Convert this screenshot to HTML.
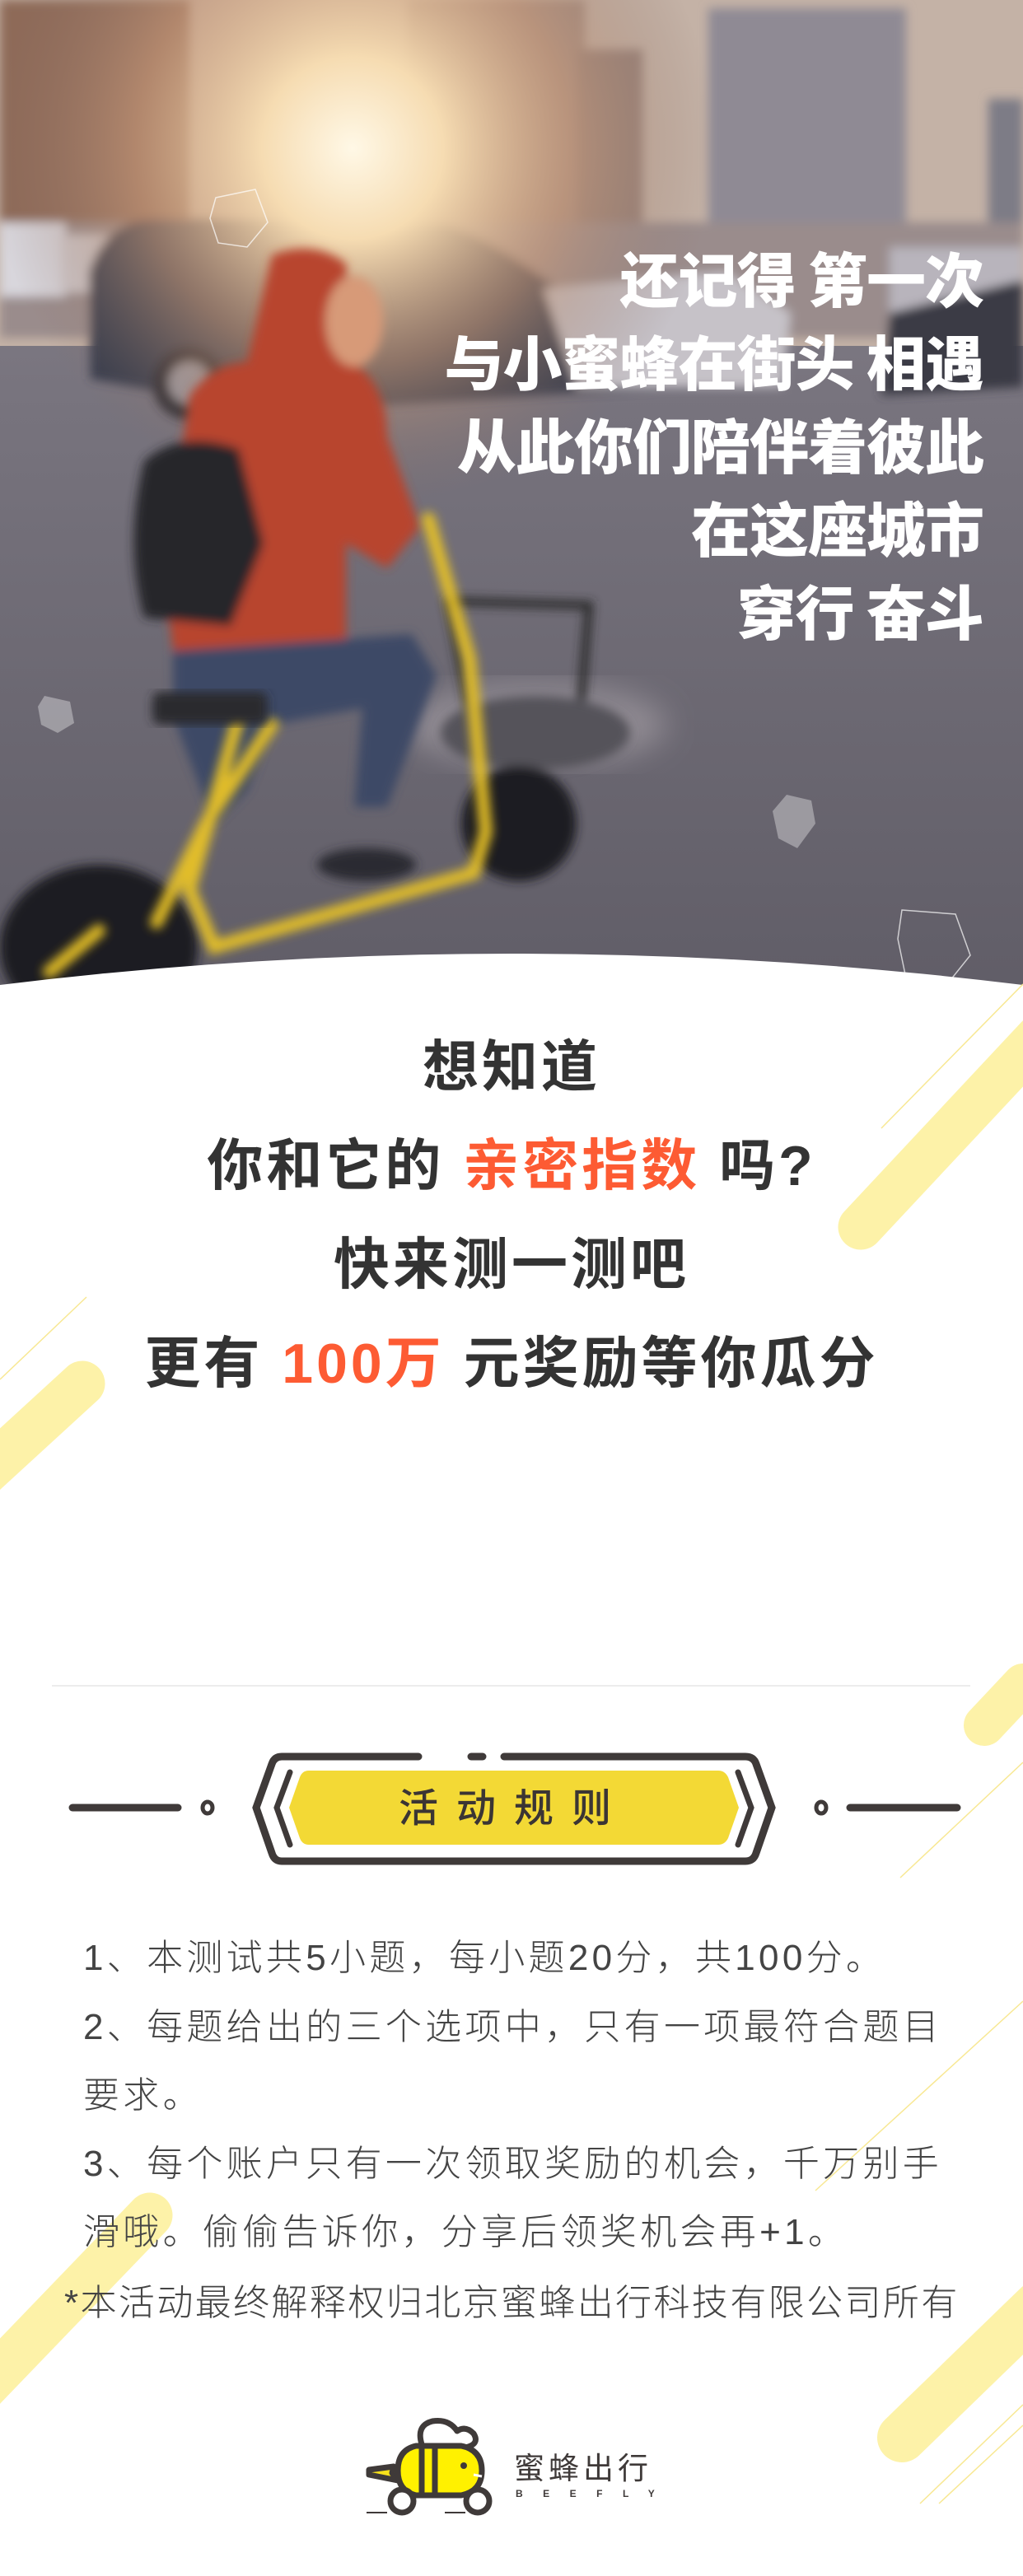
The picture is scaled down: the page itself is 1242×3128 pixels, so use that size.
<!DOCTYPE html>
<html><head><meta charset="utf-8">
<style>
*{margin:0;padding:0;box-sizing:border-box}
html,body{width:1242px;height:3128px;overflow:hidden}
body{background:#fff;position:relative;font-family:"Liberation Sans","Noto Sans CJK SC",sans-serif}
.abs{position:absolute}
.hero{position:absolute;right:48px;color:#fff;font-family:"Noto Sans CJK SC",sans-serif;font-weight:900;font-size:72px;line-height:1;text-align:right;white-space:nowrap;letter-spacing:-1px}
.big{position:absolute;left:0;width:1242px;text-align:center;font-family:"Liberation Sans","Noto Sans CJK SC",sans-serif;font-weight:700;font-size:68px;color:#333;line-height:1;letter-spacing:4px;white-space:nowrap}
.o{color:#fd5b33}
.rule{position:absolute;left:101px;font-family:"Liberation Sans","Noto Sans CJK SC",sans-serif;font-size:44px;color:#444;line-height:1;white-space:nowrap;letter-spacing:4.3px;font-weight:300}
</style></head><body>
<svg class="abs" style="left:0;top:0" width="1242" height="1250" viewBox="0 0 1242 1250">
<defs>
<radialGradient id="sun" cx="428" cy="180" r="440" gradientUnits="userSpaceOnUse">
<stop offset="0" stop-color="#fff8e6"/><stop offset="0.25" stop-color="#f6dcb2"/><stop offset="0.6" stop-color="#c99a7a" stop-opacity="0.6"/><stop offset="1" stop-color="#8a7068" stop-opacity="0"/></radialGradient>
<linearGradient id="road" x1="0" y1="0" x2="0" y2="1">
<stop offset="0" stop-color="#8c8690"/><stop offset="0.4" stop-color="#77737d"/><stop offset="1" stop-color="#5f5c66"/></linearGradient>
<filter id="bl"><feGaussianBlur stdDeviation="6"/></filter>
<filter id="bl2"><feGaussianBlur stdDeviation="18"/></filter>
</defs>
<rect width="1242" height="1250" fill="url(#road)"/>
<rect width="1242" height="420" fill="#c4b2a6"/>
<g filter="url(#bl)">
<rect x="0" y="0" width="230" height="360" fill="#8e6a58"/>
<rect x="495" y="0" width="215" height="290" fill="#a08a80"/>
<rect x="700" y="60" width="80" height="230" fill="#958078"/>
<rect x="860" y="10" width="240" height="260" fill="#8f8a94"/>
<rect x="1200" y="120" width="42" height="160" fill="#7d7c86"/>
<rect x="0" y="270" width="1242" height="140" fill="#9a8c8c"/>
<rect x="0" y="270" width="80" height="90" fill="#d8d6dc"/>
<rect x="75" y="285" width="75" height="70" fill="#cfc9cc"/>
<rect x="1080" y="300" width="162" height="150" fill="#b8b4bc"/>
<path d="M108 330 Q130 265 190 265 L540 270 Q620 300 700 370 L800 395 Q820 420 815 470 L330 500 L110 460 Z" fill="#353a4c"/>
<circle cx="230" cy="465" r="45" fill="#2a2a30"/><circle cx="230" cy="465" r="25" fill="#9a98a0"/>
<path d="M660 350 L880 330 L960 380 L950 470 L700 470 Z" fill="#c6c2c8"/>
<path d="M1080 380 L1242 340 L1242 470 L1070 480 Z" fill="#3a3b44"/>
</g>
<rect width="1242" height="1250" fill="url(#sun)"/>
<g filter="url(#bl2)">
<ellipse cx="650" cy="880" rx="160" ry="50" fill="#a8a2a8" opacity="0.6"/>
</g>
<g filter="url(#bl)">
<path d="M330 310 Q380 290 420 320 L430 440 Q470 470 470 530 L510 640 L470 690 L420 660 L420 780 L210 790 L200 700 L230 480 Q260 440 300 440 Z" fill="#b8452e"/>
<ellipse cx="430" cy="390" rx="35" ry="55" fill="#d79a78"/>
<path d="M175 560 Q220 520 290 545 L320 660 L280 760 L175 750 Q150 660 175 560 Z" fill="#26262a"/>
<path d="M210 790 L500 770 L530 820 L470 980 L430 980 L440 860 L330 880 L300 960 L260 1000 L210 870 Z" fill="#3c4a66"/>
<ellipse cx="445" cy="1050" rx="60" ry="20" fill="#2a2a30"/>
<path d="M545 730 L715 735 L705 860 L570 865 Z" fill="none" stroke="#2a2a2a" stroke-width="10"/>
<ellipse cx="650" cy="890" rx="115" ry="45" fill="#55525a"/>
<circle cx="630" cy="1000" r="70" fill="#1e1e22"/>
<ellipse cx="120" cy="1150" rx="120" ry="100" fill="#1e1e22"/>
</g>
<g fill="none" stroke="#e8c225" stroke-width="16" stroke-linecap="round" filter="url(#bl)" opacity="0.95">
<path d="M520 630 L570 800 L590 1010 L575 1060 L260 1150 L230 1080 L290 870"/>
<path d="M190 1120 L250 1000 L330 880"/>
<path d="M60 1180 L120 1130"/>
</g>
<rect x="185" y="840" width="140" height="40" rx="10" fill="#2a2a2e" filter="url(#bl)"/>
<g fill="#ffffff" opacity="0.35"><polygon points="54,845 85,852 90,878 70,890 50,880 46,858"/><polygon points="955,965 985,972 990,1000 968,1030 945,1018 938,985"/></g>
<g fill="none" stroke="#ffffff" stroke-width="1.5" opacity="0.7"><polygon points="1095,1105 1160,1110 1178,1160 1150,1195 1100,1188 1090,1140"/><polygon points="262,240 310,230 325,270 300,300 265,295 255,265"/></g>
<circle cx="621" cy="6251" r="5093" fill="#fff"/>
</svg>
<div class="hero" style="top:300px">还记得 第一次</div>
<div class="hero" style="top:401px">与小蜜蜂在街头 相遇</div>
<div class="hero" style="top:502px">从此你们陪伴着彼此</div>
<div class="hero" style="top:603px">在这座城市</div>
<div class="hero" style="top:704px">穿行 奋斗</div>

<svg class="abs" style="left:0;top:0" width="1242" height="3128">
<g stroke="#fdf2a8" stroke-linecap="round" fill="none">
<path d="M1260 1260 L1045 1490" stroke-width="55"/>
<path d="M100 1680 L-20 1790" stroke-width="55"/>
<path d="M1242 2045 L1195 2095" stroke-width="50"/>
<path d="M182 2690 L-20 2900" stroke-width="55"/>
<path d="M1260 2800 L1095 2960" stroke-width="60"/>
</g>
<g stroke="#f8e893" stroke-width="1.5" fill="none">
<path d="M1242 1195 L1070 1370"/>
<path d="M105 1575 L0 1675"/>
<path d="M1242 2140 L1093 2280"/>
<path d="M1242 2430 L990 2660"/>
<path d="M1242 2920 L1117 3040"/>
<path d="M1242 2945 L1140 3040"/>
</g>
</svg>

<div class="big" style="top:1262px">想知道</div>
<div class="big" style="top:1382px">你和它的 <span class="o">亲密指数</span> 吗?</div>
<div class="big" style="top:1502px">快来测一测吧</div>
<div class="big" style="top:1622px">更有 <span class="o">100万</span> 元奖励等你瓜分</div>

<div class="abs" style="left:63px;top:2046px;width:1115px;height:2px;background:#ececec"></div>

<svg class="abs" style="left:0;top:2120px" width="1242" height="160" viewBox="0 2120 1242 160">
<g stroke="#3f3a39" stroke-linecap="round" fill="none">
<path d="M88 2195 L216 2195" stroke-width="9"/>
<path d="M1032 2195 L1162 2195" stroke-width="9"/>
<ellipse cx="252" cy="2195" rx="6" ry="7" stroke-width="5"/>
<ellipse cx="997" cy="2195" rx="6" ry="7" stroke-width="5"/>
<path d="M508 2133 L342 2133 Q333 2133 330 2142 L311 2195 L330 2250 Q333 2260 342 2260 L905 2260 Q915 2260 918 2250 L937 2195 L918 2142 Q915 2133 905 2133 L612 2133" stroke-width="9"/>
<path d="M572 2133 L586 2133" stroke-width="9"/>
<path d="M352 2152 L336 2195 L352 2240" stroke-width="7"/>
<path d="M896 2152 L912 2195 L896 2240" stroke-width="7"/>
</g>
<path d="M375 2150 L872 2150 Q880 2150 884 2158 L897 2195 L884 2232 Q880 2240 872 2240 L375 2240 Q367 2240 364 2232 L351 2195 L364 2158 Q367 2150 375 2150 Z" fill="#f3d935"/>
<text x="624" y="2212" text-anchor="middle" font-family="Liberation Sans, Noto Sans CJK SC, sans-serif" font-size="48" fill="#3b3534" letter-spacing="22" font-weight="500">活动规则</text>
</svg>

<div class="rule" style="top:2356px">1、本测试共5小题，每小题20分，共100分。</div>
<div class="rule" style="top:2440px">2、每题给出的三个选项中，只有一项最符合题目</div>
<div class="rule" style="top:2523px">要求。</div>
<div class="rule" style="top:2606px">3、每个账户只有一次领取奖励的机会，千万别手</div>
<div class="rule" style="top:2689px">滑哦。偷偷告诉你，分享后领奖机会再+1。</div>
<div class="rule" style="top:2775px;left:78px;letter-spacing:2.4px">*本活动最终解释权归北京蜜蜂出行科技有限公司所有</div>

<svg class="abs" style="left:430px;top:2925px" width="400" height="140" viewBox="430 2925 400 140">
<g stroke="#3f3a39" stroke-width="7" stroke-linejoin="round" stroke-linecap="round">
<path d="M512 2968 Q505 2945 525 2940 Q545 2937 555 2952 Q565 2945 575 2955 Q583 2968 565 2972" fill="#fff"/>
<path d="M448 2999 L478 2995 L476 3003 L483 3012 L448 3005 Z" fill="#f7e11b"/>
<path d="M505 2970 L560 2970 Q585 2975 585 3000 Q585 3025 560 3030 L505 3030 Q483 3025 483 3000 Q483 2975 505 2970 Z" fill="#fff100"/>
<path d="M512 2972 L512 3028 M528 2972 L528 3028"/>
<circle cx="488" cy="3037" r="14" fill="#fff"/><circle cx="580" cy="3037" r="14" fill="#fff"/>
</g>
<circle cx="563" cy="2994" r="4" fill="#3f3a39"/>
<path d="M575 3005 L585 3007" stroke="#fff" stroke-width="3"/>
<g stroke="#3f3a39" stroke-width="2"><path d="M445 3051 L470 3051 M540 3051 L565 3051"/></g>
<text x="624" y="3010" font-family="Noto Sans CJK SC, sans-serif" font-size="37" fill="#3f3a39" letter-spacing="5">蜜蜂出行</text>
<text x="626" y="3032" font-family="Liberation Sans, sans-serif" font-size="12" fill="#3f3a39" letter-spacing="24.5" font-weight="700">BEEFLY</text>
</svg>
</body></html>
